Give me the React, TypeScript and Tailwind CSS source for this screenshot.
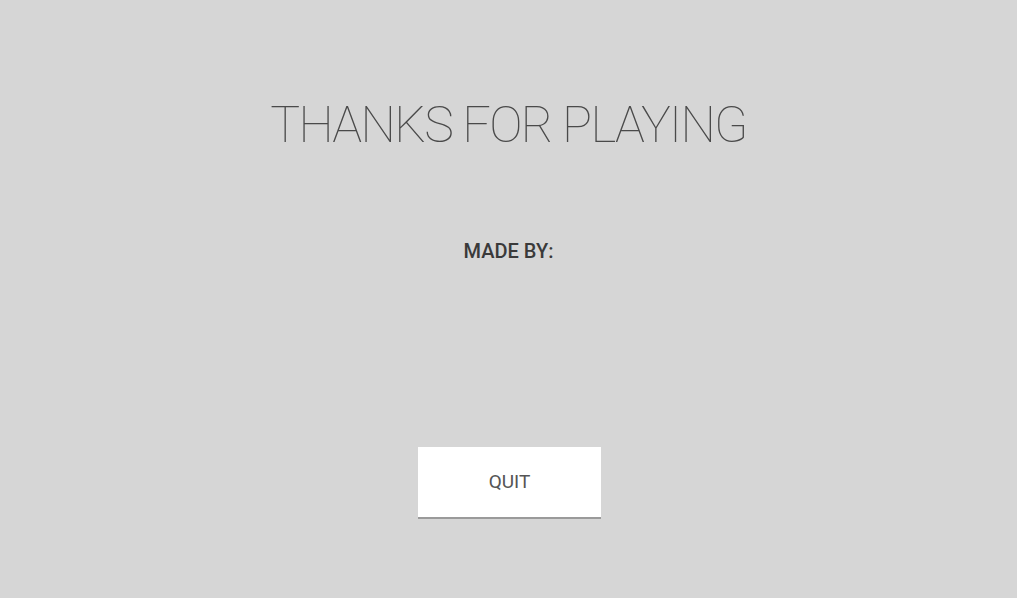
export default function App() {
  return (
    <div className="flex h-[598px] w-full flex-col items-center bg-[#d6d6d6] font-['Roboto',sans-serif]">
      <h1 className="mt-[95px] text-[50px] leading-[60px] font-thin tracking-[-1.7px] text-[#4a4a4a]">
        THANKS FOR PLAYING
      </h1>
      <p className="mt-[84px] text-[20px] leading-[24px] font-medium text-[#3a3a3a]">MADE BY:</p>
      <button className="mt-[184px] ml-[2px] h-[72px] w-[183px] border-b-2 border-[#9a9a9a] bg-white text-[19px] text-[#555555]">
        QUIT
      </button>
    </div>
  );
}
